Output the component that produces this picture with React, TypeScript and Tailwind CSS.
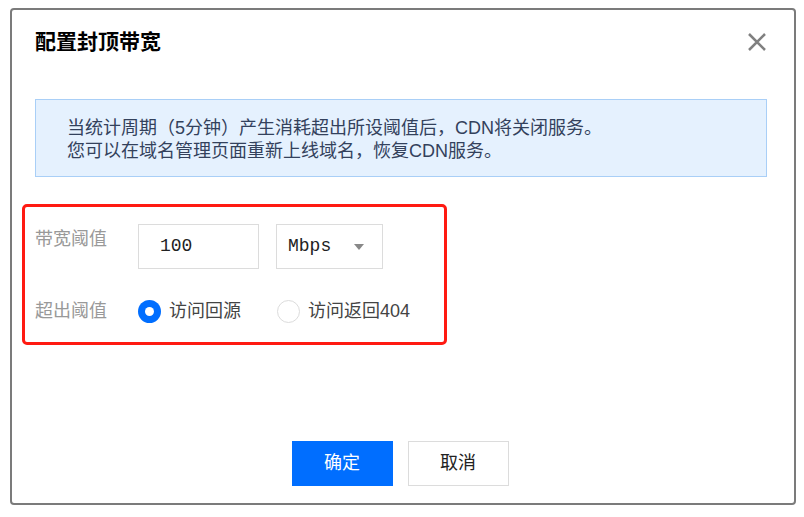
import React from "react";

const cjk = { fontFamily: '"Liberation Sans", "Noto Sans CJK SC", sans-serif' };
const mono = { fontFamily: '"Liberation Mono", "Noto Sans CJK SC", monospace' };

function Radio({ checked, label }: { checked: boolean; label: string }) {
  return (
    <label className="flex items-center gap-[8px] cursor-pointer">
      {checked ? (
        <span className="w-[23px] h-[23px] rounded-full bg-[#006eff] flex items-center justify-center">
          <span className="w-[9px] h-[9px] rounded-full bg-white" />
        </span>
      ) : (
        <span className="w-[23px] h-[23px] rounded-full border border-[#dcdcdc] bg-white" />
      )}
      <span className="text-[18px] text-[#444]">{label}</span>
    </label>
  );
}

export default function App() {
  return (
    <div className="w-[804px] h-[517px] bg-white pt-[8px] pl-[10px]" style={cjk}>
      <div className="w-[786px] h-[497px] border-2 border-[#7b7b7b] rounded-[4px] flex flex-col">
        {/* header */}
        <div className="h-[64px] flex items-center justify-between pl-[23px] pr-[27px]">
          <h2 className="text-[21px] font-bold text-black">配置封顶带宽</h2>
          <svg width="20" height="20" viewBox="0 0 20 20">
            <path d="M2 2 L18 18 M18 2 L2 18" stroke="#808080" strokeWidth="2.5" />
          </svg>
        </div>

        {/* notice */}
        <div className="mt-[25px] ml-[23px] w-[732px] h-[78px] border border-[#a9cff7] bg-[#e5f1fe] pt-[17px] pl-[31px] text-[18px] leading-[23px] text-[#33415c]">
          <p>当统计周期（5分钟）产生消耗超出所设阈值后，CDN将关闭服务。</p>
          <p>您可以在域名管理页面重新上线域名，恢复CDN服务。</p>
        </div>

        {/* form */}
        <div className="mt-[27px] ml-[10px] w-[425px] h-[141px] border-[3px] border-[#ff1a12] rounded-[5px] pl-[10px] pt-[17px]">
          <div className="flex items-start">
            <span className="w-[103px] pt-[2px] text-[18px] text-[#999]">带宽阈值</span>
            <div className="w-[121px] h-[45px] border border-[#dcdcdc] flex items-center pl-[21px] text-[18px] text-[#222]" style={mono}>
              100
            </div>
            <div className="ml-[17px] w-[107px] h-[45px] border border-[#dcdcdc] flex items-center justify-between pl-[11px] pr-[18px] text-[18px] text-[#222]" style={mono}>
              <span>Mbps</span>
              <svg width="10" height="6" viewBox="0 0 10 6">
                <path d="M0 0 L10 0 L5 6 Z" fill="#888" />
              </svg>
            </div>
          </div>
          <div className="mt-[29px] flex items-center">
            <span className="w-[103px] text-[18px] text-[#999]">超出阈值</span>
            <div className="flex items-center gap-[36px]">
              <Radio checked label="访问回源" />
              <Radio checked={false} label="访问返回404" />
            </div>
          </div>
        </div>

        {/* footer */}
        <div className="mt-auto pb-[17px] flex justify-center gap-[15px] pr-[6px]">
          <button className="w-[101px] h-[45px] bg-[#006eff] text-white text-[18px]">确定</button>
          <button className="w-[101px] h-[45px] border border-[#dcdcdc] bg-white text-[#222] text-[18px]">取消</button>
        </div>
      </div>
    </div>
  );
}
